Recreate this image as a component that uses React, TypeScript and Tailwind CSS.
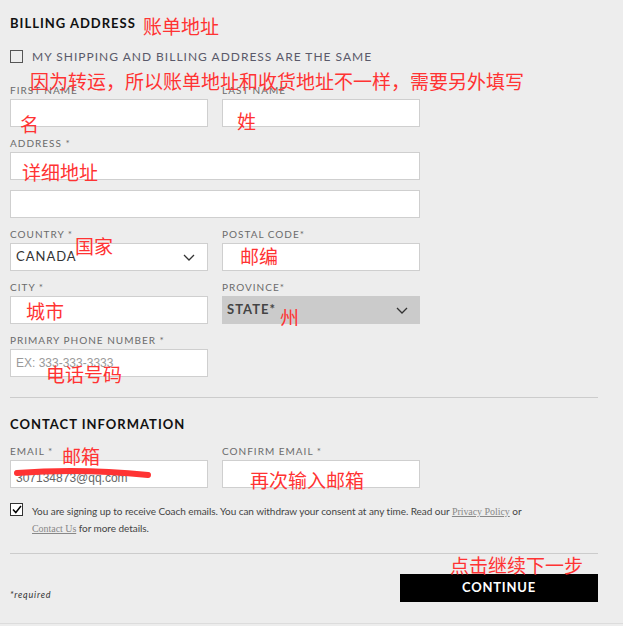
import React from 'react';

const lato = { fontFamily: 'Lato, "Open Sans", sans-serif' };

function Label({ text }: { text: string }) {
  return (
    <div className="h-[12px] leading-[12px] mb-[3px] text-[10px] tracking-[1px] text-[#6b6b6b] uppercase">
      {text}
    </div>
  );
}

function Input({ children, className = '' }: { children?: React.ReactNode; className?: string }) {
  return (
    <div className={`h-[28px] border border-[#cfcfcf] bg-white flex items-center px-[5px] ${className}`}>
      {children}
    </div>
  );
}

function Chevron() {
  return (
    <svg width="12" height="7" viewBox="0 0 12 7" className="ml-auto mr-[7px]">
      <path d="M1 1 L6 6 L11 1" fill="none" stroke="#333" strokeWidth="1.3" />
    </svg>
  );
}

function Field({ label, children }: { label: string; children: React.ReactNode }) {
  return (
    <div className="w-[198px] flex flex-col">
      <Label text={label} />
      {children}
    </div>
  );
}

const notes: { text: string; x: number; y: number }[] = [
  { text: '账单地址', x: 143, y: 16 },
  { text: '因为转运，所以账单地址和收货地址不一样，需要另外填写', x: 30, y: 71 },
  { text: '名', x: 20, y: 114 },
  { text: '姓', x: 237, y: 111 },
  { text: '详细地址', x: 22, y: 162 },
  { text: '国家', x: 75, y: 236 },
  { text: '邮编', x: 240, y: 246 },
  { text: '城市', x: 26, y: 301 },
  { text: '州', x: 280, y: 307 },
  { text: '电话号码', x: 46, y: 364 },
  { text: '邮箱', x: 62, y: 446 },
  { text: '再次输入邮箱', x: 250, y: 470 },
  { text: '点击继续下一步', x: 450, y: 555 },
];

export default function App() {
  return (
    <div className="relative w-[623px] h-[626px] bg-[#ededed] overflow-hidden" style={lato}>
      <div className="pl-[10px] pr-[25px] pt-[14px]">
        <div className="h-[18px] leading-[18px] text-[13px] font-bold tracking-[1px] text-[#111]">
          BILLING ADDRESS
        </div>

        <div className="mt-[18px] flex items-center h-[13px]">
          <div className="w-[13px] h-[13px] border-[1.5px] border-[#555]" />
          <span className="ml-[9px] text-[12px] tracking-[1px] text-[#5a5a6a] leading-none">
            MY SHIPPING AND BILLING ADDRESS ARE THE SAME
          </span>
        </div>

        <div className="mt-[21px] flex flex-col gap-[10px] w-[410px]">
          <div className="flex justify-between">
            <Field label="First Name">
              <Input />
            </Field>
            <Field label="Last Name">
              <Input />
            </Field>
          </div>

          <div className="flex flex-col">
            <Label text="Address *" />
            <Input />
            <Input className="mt-[10px]" />
          </div>

          <div className="flex justify-between">
            <Field label="Country *">
              <Input>
                <span className="text-[13px] tracking-[1px] text-[#333]">CANADA</span>
                <Chevron />
              </Input>
            </Field>
            <Field label="Postal Code*">
              <Input />
            </Field>
          </div>

          <div className="flex justify-between">
            <Field label="City *">
              <Input />
            </Field>
            <Field label="Province*">
              <div className="h-[28px] bg-[#cbcbcb] flex items-center px-[5px]">
                <span className="text-[13px] font-bold tracking-[1px] text-[#444]">STATE*</span>
                <Chevron />
              </div>
            </Field>
          </div>

          <div className="flex">
            <Field label="Primary Phone Number *">
              <Input>
                <span className="text-[12px] text-[#9a9a9a]" style={{ fontFamily: '"Liberation Sans", Arial, sans-serif' }}>
                  EX: 333-333-3333
                </span>
              </Input>
            </Field>
          </div>
        </div>

        <div className="mt-[20px] border-t border-[#cccccc]" />

        <div className="mt-[17px] h-[18px] leading-[18px] text-[13px] font-bold tracking-[1px] text-[#111]">
          CONTACT INFORMATION
        </div>

        <div className="mt-[12px] flex justify-between w-[410px]">
          <Field label="Email *">
            <Input>
              <span className="text-[12px] text-[#666] pt-[8px]" style={{ fontFamily: '"Liberation Sans", Arial, sans-serif' }}>
                307134873@qq.com
              </span>
            </Input>
          </Field>
          <Field label="Confirm Email *">
            <Input />
          </Field>
        </div>

        <div className="mt-[15px] flex">
          <div className="w-[13px] h-[13px] border-[1.5px] border-[#333] bg-white flex items-center justify-center shrink-0">
            <svg width="10" height="9" viewBox="0 0 10 9">
              <path d="M1 4.5 L3.8 7.5 L9 1" fill="none" stroke="#000" strokeWidth="1.5" />
            </svg>
          </div>
          <p className="ml-[9px] w-[500px] text-[10px] leading-[16px] tracking-[-0.05px] text-[#444]">
            You are signing up to receive Coach emails. You can withdraw your consent at any time. Read our{' '}
            <a className="underline text-[#888]" style={{ fontFamily: '"Liberation Serif", serif' }}>
              Privacy Policy
            </a>{' '}
            or{' '}
            <br />
            <a className="underline text-[#888]" style={{ fontFamily: '"Liberation Serif", serif' }}>
              Contact Us
            </a>{' '}
            for more details.
          </p>
        </div>

        <div className="mt-[16px] border-t border-[#cccccc]" />

        <div className="mt-[20px] flex justify-between items-end">
          <span className="text-[9px] italic tracking-[0.8px] text-[#333] mb-[1px]">*required</span>
          <button className="w-[198px] h-[28px] bg-black text-white text-[13px] font-bold tracking-[0.8px]">
            CONTINUE
          </button>
        </div>
      </div>

      <div className="absolute left-0 right-0 bottom-[2px] h-[1px] bg-[#dcdcdc]" />

      <svg className="absolute left-0 top-0 pointer-events-none" width="623" height="626">
        <path d="M17 473 Q 80 468 148 475" fill="none" stroke="#ff3333" strokeWidth="6" strokeLinecap="round" />
      </svg>

      {notes.map((n) => (
        <span
          key={n.text}
          className="absolute text-[19px] leading-[19px] text-[#ff3333] whitespace-nowrap"
          style={{ left: n.x, top: n.y, fontFamily: '"Noto Sans CJK SC", sans-serif' }}
        >
          {n.text}
        </span>
      ))}
    </div>
  );
}
